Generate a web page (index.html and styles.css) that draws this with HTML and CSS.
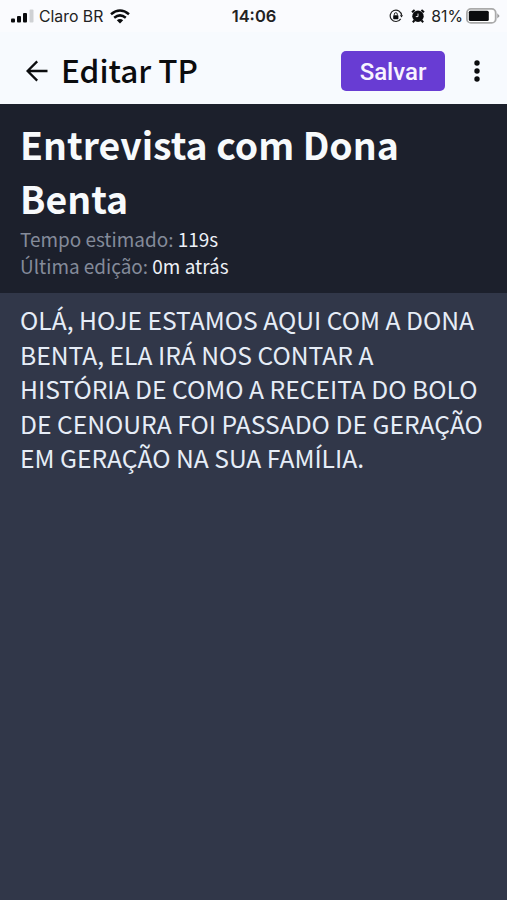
FILE: index.html
```html
<!doctype html>
<html lang="pt-BR">
  <head>
    <meta charset="utf-8">
    <title>Editar TP</title>
    <link rel="stylesheet" href="styles.css">
  </head>
  <body>
    <div class="status">
      <div class="carrier">
        <svg class="signal" width="23" height="14" viewBox="0 0 23 14">
          <rect x="0" y="9.5" width="4" height="4" rx="1"/>
          <rect x="6" y="7" width="4" height="6.5" rx="1"/>
          <rect x="12" y="4" width="4" height="9.5" rx="1"/>
          <rect class="off" x="18.5" y="0.5" width="4" height="13" rx="1"/>
        </svg>
        <span class="carrier_name">Claro BR</span>
        <svg class="wifi" width="20" height="15" viewBox="0 0 20 15">
          <path d="M1 5.3 Q10 -2.3 19 5.3M4.2 8.7 Q10 4 15.8 8.7" fill="none" stroke="#0b0c0e" stroke-width="2.5"/>
          <path d="M6.8 11.2 Q10 8.7 13.2 11.2 L10 14.5Z"/>
        </svg>
      </div>
      <div class="time">14:06</div>
      <div class="battery_info">
        <svg width="14" height="14" viewBox="0 0 14 14">
          <path d="M11.7 9.9A5.7 5.7 0 1 1 12.6 6.3" fill="none" stroke="#222" stroke-width="1.2"/>
          <path d="M10.9 6.2h3.1l-1.5 2.4z"/>
          <rect x="4.2" y="6.2" width="5.2" height="4" rx=".6"/>
          <path d="M5.3 6.5V5.2a1.5 1.5 0 0 1 3 0v1.3" fill="none" stroke="#222" stroke-width="1"/>
        </svg>
        <svg class="alarm" width="14" height="14" viewBox="0 0 14 14">
          <circle cx="7" cy="7.3" r="5.7"/>
          <path d="M1 3.2L3.6 .9M13 3.2L10.4 .9M3.4 11.5L1.8 13.2M10.6 11.5l1.6 1.7" stroke="#0b0c0e" stroke-width="2"/>
          <path d="M7 4.6v3H4.8" fill="none" stroke="#fafbfe" stroke-width=".9"/>
        </svg>
        <span class="percent">81%</span>
        <svg class="battery" width="34" height="16" viewBox="0 0 34 16">
          <rect x=".9" y=".9" width="28.8" height="14" rx="4" fill="#fff" stroke="#aaa" stroke-width="1.8"/>
          <rect x="2.8" y="2.8" width="20" height="10.2" rx="1.5"/>
          <path d="M31.3 5.2L33.6 8 31.3 10.6Z" fill="#999"/>
        </svg>
      </div>
    </div>

    <div class="header">
      <svg class="back" width="22" height="22" viewBox="0 0 22 22">
        <path d="M21.5 11H2M11.2 1.4L1.6 11l9.6 9.6" fill="none" stroke="#0b0c0e" stroke-width="2.3"/>
      </svg>
      <h1>Editar TP</h1>
      <button class="save">Salvar</button>
      <svg class="more" width="6" height="22" viewBox="0 0 6 22">
        <circle cx="3" cy="3" r="2.7"/>
        <circle cx="3" cy="11" r="2.7"/>
        <circle cx="3" cy="19" r="2.7"/>
      </svg>
    </div>

    <div class="info">
      <h2>Entrevista com Dona Benta</h2>
      <p>Tempo estimado: <span>119s</span></p>
      <p>Última edição: <span>0m atrás</span></p>
    </div>

    <div class="text">OLÁ, HOJE ESTAMOS AQUI COM A DONA BENTA, ELA IRÁ NOS CONTAR A HISTÓRIA DE COMO A RECEITA DO BOLO DE CENOURA FOI PASSADO DE GERAÇÃO EM GERAÇÃO NA SUA FAMÍLIA.</div>
  </body>
</html>
```
FILE: styles.css
```css
body {
  margin: 0;
  height: 900px;
  display: flex;
  flex-direction: column;
  overflow: hidden;
  background-color: #313749;
  font-family: "Noto Sans CJK JP", "Noto Sans", sans-serif;
}
h1, h2, p {
  margin: 0;
}
svg {
  display: block;
  flex: none;
  fill: #0b0c0e;
}

.status {
  height: 32px;
  display: grid;
  grid-template-columns: 1fr auto 1fr;
  align-items: center;
  box-sizing: border-box;
  padding: 0 8px 0 11px;
  background-color: #fafbfe;
  font-family: Inter, "Liberation Sans", sans-serif;
  color: #222;
}
.carrier, .battery_info {
  display: flex;
  align-items: center;
}
.battery_info {
  justify-content: flex-end;
}
.signal .off {
  fill: #cfd1d4;
}
.carrier_name {
  margin-left: 5px;
  font-size: 15.8px;
}
.wifi {
  margin-left: 7px;
}
.time {
  margin-right: 2px;
  font-size: 16.5px;
  font-weight: 600;
}
.alarm {
  margin-left: 8px;
}
.percent {
  margin: 0 3px 0 6px;
  font-size: 15.8px;
}
.battery {
  margin-right: -1px;
}

.header {
  height: 72px;
  display: flex;
  align-items: center;
  box-sizing: border-box;
  padding: 6px 27px 0 26px;
  background-color: #f7fafe;
}
.header h1 {
  margin: -5px 0 0 13px;
  font-size: 31.5px;
  line-height: 44px;
  font-weight: 500;
  color: #0b0c0e;
}
.save {
  width: 104px;
  height: 40px;
  margin-left: auto;
  padding: 1px 0 0;
  border: none;
  border-radius: 5px;
  background-color: #683cd3;
  color: #f7f4ff;
  font: 500 24px Roboto, sans-serif;
}
.more {
  margin-left: 29px;
}

.info {
  height: 189px;
  box-sizing: border-box;
  padding: 13px 20px 0;
  background-color: #1c202c;
  color: #f7fafc;
}
.info h2 {
  font-size: 37.4px;
  line-height: 54px;
  font-weight: 700;
}
.info p {
  font-size: 18.95px;
  line-height: 27px;
  color: #848b9a;
}
.info p span {
  color: #edf0f7;
}

.text {
  padding: 9px 20px;
  font-size: 24.65px;
  line-height: 34.5px;
  color: #e6edf7;
}
```
